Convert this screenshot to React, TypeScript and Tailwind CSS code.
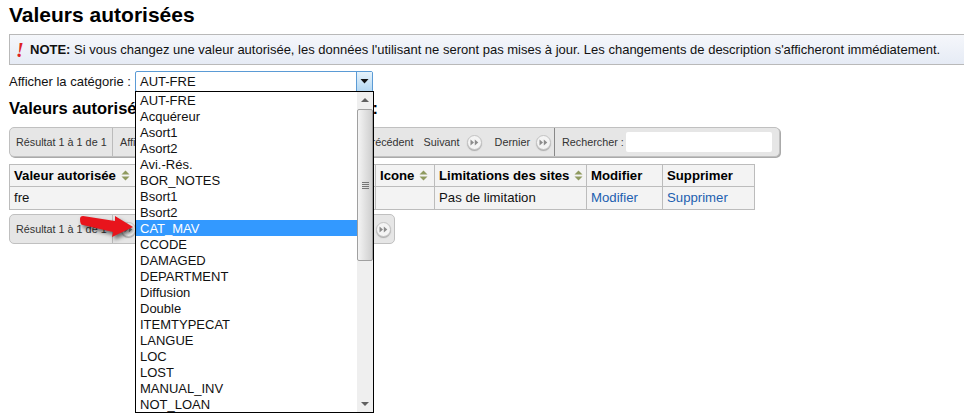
const options = [
  'AUT-FRE', 'Acquéreur', 'Asort1', 'Asort2', 'Avi.-Rés.', 'BOR_NOTES', 'Bsort1', 'Bsort2', 'CAT_MAV', 'CCODE',
  'DAMAGED', 'DEPARTMENT', 'Diffusion', 'Double', 'ITEMTYPECAT', 'LANGUE', 'LOC', 'LOST', 'MANUAL_INV', 'NOT_LOAN',
]

function SortIcon() {
  return (
    <svg width="9" height="11" viewBox="0 0 9 11" className="shrink-0">
      <path d="M4.5 0.5L8.5 4.5H0.5Z M4.5 10.5L0.5 6.5H8.5Z" fill="#8f9a5f" />
    </svg>
  )
}

function PageButton() {
  return (
    <span className="flex h-[15px] w-[15px] items-center justify-center rounded-full border border-[#c4c4c4] bg-[#f4f4f4] shadow-[0_1px_1px_#aaa]">
      <svg width="9" height="7" viewBox="0 0 9 7">
        <path d="M0.5 0.5L4 3.5L0.5 6.5Z M4.8 0.5L8.3 3.5L4.8 6.5Z" fill="#8c8c8c" />
      </svg>
    </span>
  )
}

function Th({ label, sort }: { label: string; sort?: boolean }) {
  return (
    <th className="border border-[#bcbcbc] px-[4px] text-left align-middle font-bold">
      <span className="flex items-center gap-[5px] whitespace-nowrap">
        {label}
        {sort && <SortIcon />}
      </span>
    </th>
  )
}

function SelectDropdown() {
  return (
    <div className="absolute left-[135px] top-[91px] flex h-[322px] w-[239px] border border-black bg-white text-[13px] leading-[18px] text-[#111]">
      <ul className="flex-1">
        {options.map(o => (
          <li key={o} className={`h-[16px] pl-[4px] ${o === 'CAT_MAV' ? 'bg-[#3399ff] text-white' : ''}`}>
            {o}
          </li>
        ))}
      </ul>
      <div className="flex w-[16px] flex-col items-center bg-[#efefef]">
        <svg width="16" height="17" viewBox="0 0 16 17" className="shrink-0">
          <path d="M8 6L12 10H4Z" fill="#606060" />
        </svg>
        <div className="flex h-[152px] w-[16px] shrink-0 flex-col items-center justify-center gap-[1px] rounded-[2px] border border-[#a0a0a0] bg-gradient-to-r from-[#f4f4f4] to-[#cfcfcf]">
          <span className="h-px w-[7px] bg-[#777]" />
          <span className="h-px w-[7px] bg-[#777]" />
          <span className="h-px w-[7px] bg-[#777]" />
          <span className="h-px w-[7px] bg-[#777]" />
        </div>
        <div className="flex-1" />
        <svg width="16" height="17" viewBox="0 0 16 17" className="shrink-0">
          <path d="M8 11L4 7H12Z" fill="#606060" />
        </svg>
      </div>
    </div>
  )
}

export default function App() {
  return (
    <div className="relative h-[413px] w-[964px] overflow-hidden bg-white pl-[9px] font-['Liberation_Sans',Arial,sans-serif] text-[#111]">
      <h1 className="pt-[3px] text-[21px] font-bold leading-[24px] text-black">Valeurs autorisées</h1>

      <div className="mt-[7px] flex h-[31px] w-[960px] items-center border border-[#b9b9b9] bg-gradient-to-b from-[#f5f7fb] to-[#e6ebf5] text-[13px]">
        <span className="w-[20px] shrink-0 pl-[6px] font-['Liberation_Serif',serif] text-[20px] font-bold italic leading-none text-[#dd2222]">!</span>
        <span className="whitespace-nowrap">
          <b>NOTE:</b> Si vous changez une valeur autorisée, les données l'utilisant ne seront pas mises à jour. Les changements de description s'afficheront immédiatement.
        </span>
      </div>

      <div className="mt-[6px] flex h-[21px] items-center text-[13px]">
        <span className="w-[126px] whitespace-nowrap">Afficher la catégorie :</span>
        <div className="flex h-[21px] w-[238px] items-center rounded-[2px] border border-[#5b9bd5] pl-[4px]">
          <span className="flex-1 text-[13px]">AUT-FRE</span>
          <span className="flex h-[19px] w-[16px] items-center justify-center border-l border-[#5b9bd5] bg-gradient-to-b from-[#e6f3fc] to-[#b5d8f2]">
            <svg width="9" height="5" viewBox="0 0 9 5"><path d="M0.5 0H8.5L4.5 4.5Z" fill="#111" /></svg>
          </span>
        </div>
      </div>

      <h3 className="mt-[6px] whitespace-nowrap text-[16.5px] font-bold leading-[20px] text-black">
        Valeurs autorisées pour la catégorie AUT-FRE :
      </h3>

      <div className="mt-[9px] flex h-[30px] w-[771px] items-center rounded-[5px] border border-[#c0c0c0] bg-[#e6e6e6] text-[10.8px] text-[#333] shadow-[1px_1px_0_#aaa]">
        <span className="flex h-full w-[103px] items-center whitespace-nowrap border-r border-[#bbb] pl-[6px]">Résultat 1 à 1 de 1</span>
        <span className="flex h-full flex-1 items-center whitespace-nowrap pl-[7px]">
          Afficher
          <span className="ml-auto flex items-center">
            Précédent
            <span className="ml-[10px]">Suivant</span>
            <span className="ml-[7px]"><PageButton /></span>
            <span className="ml-[13px]">Dernier</span>
            <span className="ml-[6px] mr-[3px]"><PageButton /></span>
          </span>
        </span>
        <span className="flex h-full w-[225px] items-center whitespace-nowrap border-l border-[#888] pl-[7px]">
          Rechercher :
          <span className="ml-auto mr-[7px] h-[20px] w-[146px] rounded-[2px] bg-white" />
        </span>
      </div>

      <table className="mt-[7px] w-[745px] table-fixed border-collapse bg-[#f3f3f3] text-[13.2px]">
        <colgroup>
          <col className="w-[366px]" />
          <col className="w-[59px]" />
          <col className="w-[152px]" />
          <col className="w-[76px]" />
          <col className="w-[92px]" />
        </colgroup>
        <thead>
          <tr className="h-[22px] text-black">
            <Th label="Valeur autorisée" sort />
            <Th label="Icone" sort />
            <Th label="Limitations des sites" sort />
            <Th label="Modifier" />
            <Th label="Supprimer" />
          </tr>
        </thead>
        <tbody>
          <tr className="h-[23px]">
            <td className="border border-[#bcbcbc] px-[4px]">fre</td>
            <td className="border border-[#bcbcbc]" />
            <td className="border border-[#bcbcbc] px-[4px]">Pas de limitation</td>
            <td className="border border-[#bcbcbc] px-[4px] text-[#1d5fb0]">Modifier</td>
            <td className="border border-[#bcbcbc] px-[4px] text-[#1d5fb0]">Supprimer</td>
          </tr>
        </tbody>
      </table>

      <div className="mt-[4px] flex h-[30px] w-[386px] items-center rounded-[5px] border border-[#c0c0c0] bg-[#e6e6e6] text-[10.8px] text-[#333]">
        <span className="flex h-full w-[103px] items-center whitespace-nowrap border-r border-[#bbb] pl-[6px]">Résultat 1 à 1 de 1</span>
        <span className="ml-[8px]"><PageButton /></span>
        <span className="ml-auto mr-[3px]"><PageButton /></span>
      </div>

      <SelectDropdown />

      {/* red annotation arrow */}
      <svg width="62" height="30" viewBox="0 0 62 30" className="absolute left-[78px] top-[214px] drop-shadow-[2px_3px_2px_rgba(0,0,0,0.55)]">
        <path d="M2 5C2 3 3 2 5 2L37 7L37 2L55 13L34 23L35 18L5 11C3 11 2 9 2 5Z" fill="#e8141c" />
      </svg>
    </div>
  )
}
